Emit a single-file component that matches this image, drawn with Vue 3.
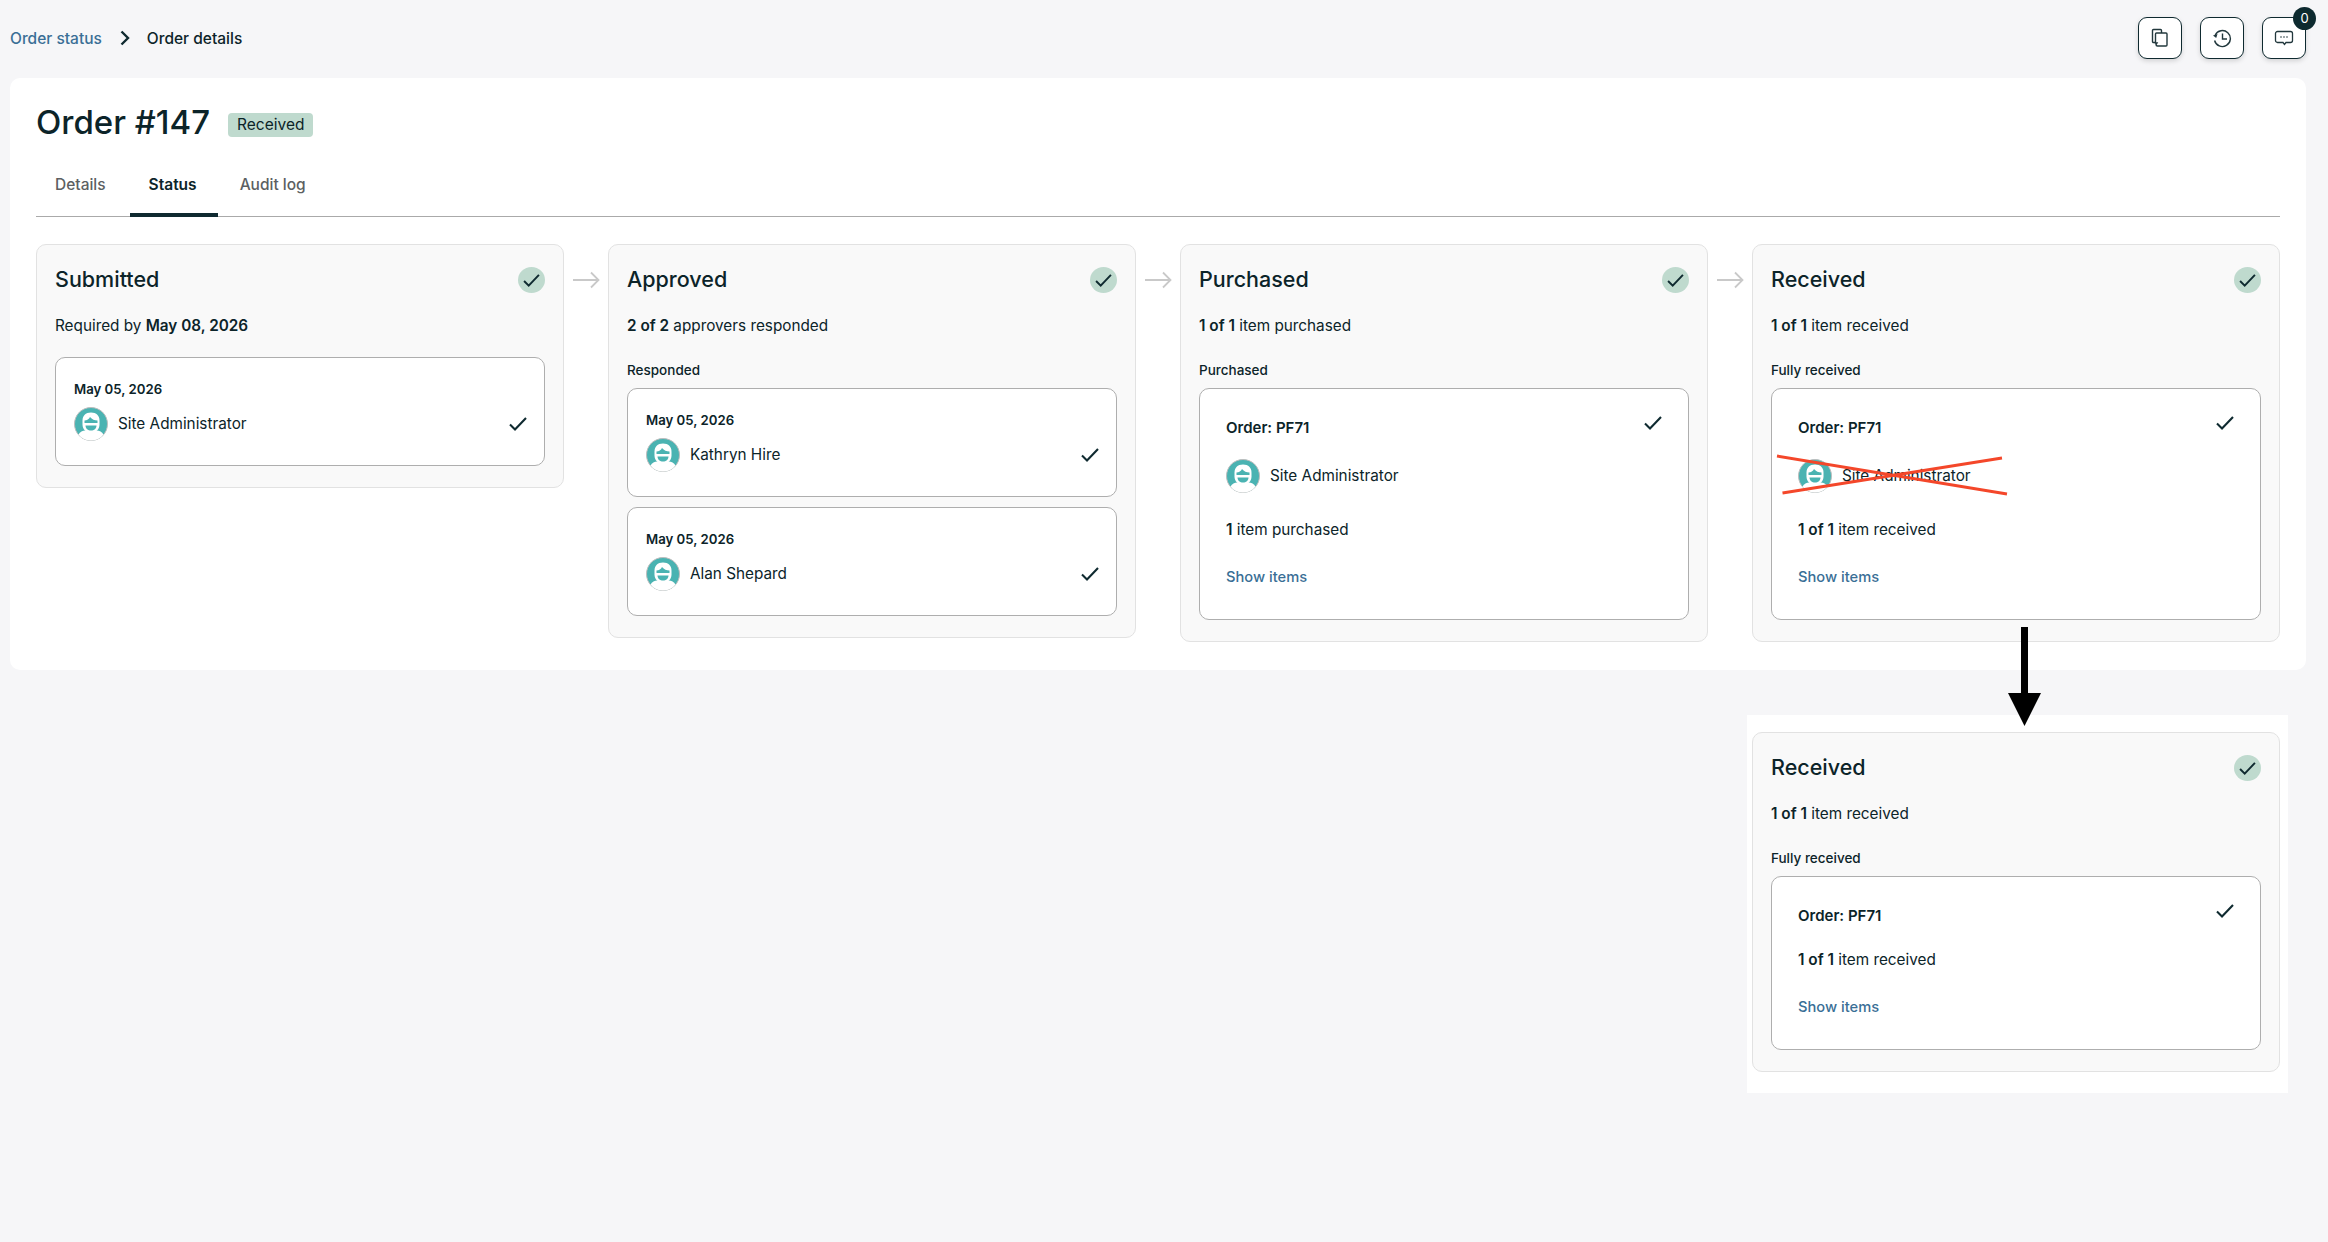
<template>
  <div class="page">
    <svg class="sprites" width="0" height="0" aria-hidden="true">
      <symbol id="avatar" viewBox="0 0 34 34">
        <circle cx="17" cy="17" r="16.500" fill="#4ab3b2" stroke="#bdbdbd" />
        <path d="M4.500 27.500c1.500-2.500 4-4 7-4h11c3 0 5.500 1.500 7 4-3 4-7.500 6-12.500 6s-9.500-2-12.500-6z" fill="#fff" />
        <path d="M17 5.500c5.500 0 8.500 3.500 8.500 8v4c0 5-3.500 8-8.500 8s-8.500-3-8.500-8v-4c0-4.500 3-8 8.500-8z" fill="#fff" />
        <path d="M10.500 13.500c2.500 0 4.500-1.500 5.500-3.500 2 2.500 4.500 3.500 7.500 3.500v2.500h-13z" fill="#4ab3b2" />
        <path d="M11.500 18.500h11c0 3-2.500 5-5.500 5s-5.500-2-5.500-5z" fill="#4ab3b2" />
      </symbol>
      <symbol id="tick" viewBox="0 0 18 14">
        <path d="M1 7.500 6 12.500 17 1" fill="none" stroke="#0f2a30" stroke-width="2.100" />
      </symbol>
    </svg>

    <header class="topbar">
      <nav class="crumbs">
        <a class="crumb-link">Order status</a>
        <svg class="crumb-sep" width="10" height="16" viewBox="0 0 10 16">
          <path d="M1.500 1.500 8 8 1.500 14.500" fill="none" stroke="#0f2a30" stroke-width="2.400" />
        </svg>
        <span class="crumb-current">Order details</span>
      </nav>
      <div class="actions">
        <button class="icon-btn">
          <svg width="20" height="20" viewBox="0 0 20 20" fill="none" stroke="#22383d" stroke-width="1.400">
            <path d="M5.500 14.500H3.500a1 1 0 0 1-1-1V2.500a1 1 0 0 1 1-1h7a1 1 0 0 1 1 1V5" />
            <path d="M6.500 5h9.500a1 1 0 0 1 1 1v11a1 1 0 0 1-1 1H7.500a1.500 1.500 0 0 1-1.500-1.500l1-1.500H5.500V6a1 1 0 0 1 1-1z" />
          </svg>
        </button>
        <button class="icon-btn">
          <svg width="20" height="20" viewBox="0 0 20 20" fill="none" stroke="#22383d" stroke-width="1.400">
            <path d="M3.200 7a8 8 0 1 1-.6 5.500" />
            <path d="M1 7.500 4.200 10 5.500 6z" fill="#22383d" stroke="none" />
            <path d="M10.500 5.500v5.500H15" />
          </svg>
        </button>
        <button class="icon-btn">
          <svg width="20" height="16" viewBox="0 0 20 16" fill="none" stroke="#22383d" stroke-width="1.300">
            <path d="M3.500 1.500h13a2 2 0 0 1 2 2v7a2 2 0 0 1-2 2h-4.500l-1.500 2-1.500-2H3.500a2 2 0 0 1-2-2v-7a2 2 0 0 1 2-2z" />
            <circle cx="7" cy="7" r=".8" fill="#22383d" stroke="none" />
            <circle cx="10" cy="7" r=".8" fill="#22383d" stroke="none" />
            <circle cx="13" cy="7" r=".8" fill="#22383d" stroke="none" />
          </svg>
          <span class="count">0</span>
        </button>
      </div>
    </header>

    <main class="panel">
      <div class="title-row">
        <h1>Order #147</h1>
        <span class="pill">Received</span>
      </div>

      <div class="tabs">
        <span v-for="t in tabs" :key="t" class="tab" :class="{ active: t === 'Status' }">{{ t }}</span>
      </div>

      <section class="steps">
        <template v-for="(step, i) in steps" :key="step.title">
          <div v-if="i > 0" class="arrow">
            <svg width="27" height="18" viewBox="0 0 27 18" fill="none" stroke="#c9c9c9" stroke-width="1.800">
              <path d="M0 9h25M18 1.500 25.500 9 18 16.500" />
            </svg>
          </div>
          <article class="step">
            <div class="step-head">
              <h2>{{ step.title }}</h2>
              <span class="done"><svg width="17" height="13"><use href="#tick" /></svg></span>
            </div>
            <p class="summary"><b v-if="step.lead">{{ step.lead }}</b> {{ step.text }} <b v-if="step.tail">{{ step.tail }}</b></p>
            <div v-if="step.label" class="label">{{ step.label }}</div>

            <div v-for="p in step.people" :key="p" class="box person" :class="{ first: !step.label }">
              <div class="date">May 05, 2026</div>
              <div class="person-row">
                <svg class="avatar" width="34" height="34"><use href="#avatar" /></svg>
                <span class="name">{{ p }}</span>
                <svg class="tick" width="18" height="14"><use href="#tick" /></svg>
              </div>
            </div>

            <div v-if="step.order" class="box order">
              <div class="order-row">
                <span class="order-no">Order: PF71</span>
                <svg class="tick" width="18" height="14"><use href="#tick" /></svg>
              </div>
              <div class="person-row by">
                <svg class="avatar" width="34" height="34"><use href="#avatar" /></svg>
                <span class="name">Site Administrator</span>
              </div>
              <p class="count-line"><b>{{ step.order }}</b> {{ step.orderText }}</p>
              <a class="show">Show items</a>
            </div>
          </article>
        </template>
      </section>
    </main>

    <div class="after">
      <article class="step">
        <div class="step-head">
          <h2>Received</h2>
          <span class="done"><svg width="17" height="13"><use href="#tick" /></svg></span>
        </div>
        <p class="summary"><b>1 of 1</b> item received</p>
        <div class="label">Fully received</div>
        <div class="box order">
          <div class="order-row">
            <span class="order-no">Order: PF71</span>
            <svg class="tick" width="18" height="14"><use href="#tick" /></svg>
          </div>
          <p class="count-line compact"><b>1 of 1</b> item received</p>
          <a class="show">Show items</a>
        </div>
      </article>
    </div>

    <!-- review markup drawn over the screenshot -->
    <svg class="markup" width="2328" height="1242" viewBox="0 0 2328 1242">
      <path d="M1777 456 2007 494M1782.500 493 2002 458" stroke="#f4472a" stroke-width="3" fill="none" />
      <path d="M2024.500 627v68" stroke="#000" stroke-width="7" fill="none" />
      <path d="M2008 693h33l-16.500 33z" fill="#000" />
    </svg>
  </div>
</template>

<script setup>
const tabs = ['Details', 'Status', 'Audit log']

const steps = [
  { title: 'Submitted', text: 'Required by', tail: 'May 08, 2026', people: ['Site Administrator'] },
  {
    title: 'Approved',
    lead: '2 of 2',
    text: 'approvers responded',
    label: 'Responded',
    people: ['Kathryn Hire', 'Alan Shepard'],
  },
  {
    title: 'Purchased',
    lead: '1 of 1',
    text: 'item purchased',
    label: 'Purchased',
    order: '1',
    orderText: 'item purchased',
  },
  {
    title: 'Received',
    lead: '1 of 1',
    text: 'item received',
    label: 'Fully received',
    order: '1 of 1',
    orderText: 'item received',
  },
]
</script>

<style>
html,
body {
  margin: 0;
  background: #f6f6f8;
}
</style>

<style scoped>
.page {
  position: relative;
  width: 2328px;
  min-height: 1242px;
  display: flex;
  flex-direction: column;
  background: #f6f6f8;
  color: #0c2429;
  font-family: Inter, 'Liberation Sans', sans-serif;
  font-size: 15.300px;
  overflow: hidden;
}

.sprites {
  position: absolute;
}

.topbar {
  height: 78px;
  box-sizing: border-box;
  padding: 17px 22px 0 10px;
  display: flex;
  justify-content: space-between;
  align-items: flex-start;
}

.crumbs {
  height: 42px;
  display: flex;
  align-items: center;
  font-size: 15.500px;
  font-weight: 500;
}

.crumb-link {
  color: #3a6f96;
}

.crumb-sep {
  margin: 0 17px 0 18px;
}

.actions {
  display: flex;
  gap: 18px;
}

.icon-btn {
  position: relative;
  width: 44px;
  height: 42px;
  padding: 0;
  display: flex;
  align-items: center;
  justify-content: center;
  background: #fff;
  border: 1.500px solid #0f2a30;
  border-radius: 9px;
  box-shadow: 0 2px 5px rgba(0, 0, 0, 0.15);
}

.count {
  position: absolute;
  top: -11px;
  right: -11px;
  width: 23px;
  height: 23px;
  border-radius: 50%;
  background: #0d2a2f;
  color: #fff;
  font-family: Inter, sans-serif;
  font-size: 13px;
  line-height: 23px;
  text-align: center;
}

.panel {
  margin: 0 22px 0 10px;
  padding: 24px 26px 28px;
  background: #fff;
  border-radius: 10px;
}

.title-row {
  display: flex;
  align-items: center;
  gap: 18px;
}

h1 {
  margin: 0;
  font-size: 33px;
  line-height: 40px;
  font-weight: 500;
}

.pill {
  margin-top: 6px;
  padding: 0 9px;
  height: 24px;
  line-height: 24px;
  font-size: 15.500px;
  background: #bfdace;
  border-radius: 4px;
}

.tabs {
  margin-top: 22px;
  display: flex;
  gap: 3px;
  border-bottom: 1.500px solid #aaa;
}

.tab {
  padding: 10px 21px 17px 19px;
  font-size: 15.500px;
  font-weight: 500;
  line-height: 22px;
  color: #5c5f62;
  border-bottom: 4px solid transparent;
  margin-bottom: -1.500px;
}

.tab.active {
  color: #0c2429;
  font-weight: 600;
  border-bottom-color: #0f2a30;
}

.steps {
  margin-top: 27px;
  display: flex;
  align-items: flex-start;
}

.arrow {
  width: 44px;
  flex: none;
  display: flex;
  justify-content: center;
  padding-top: 27px;
}

.step {
  flex: 1;
  box-sizing: border-box;
  min-width: 0;
  padding: 20px 18px 21px;
  background: #f9f9f9;
  border: 1.500px solid #e2e2e2;
  border-radius: 10px;
}

.step-head {
  display: flex;
  justify-content: space-between;
  align-items: center;
  height: 28px;
}

h2 {
  margin: 0;
  font-size: 21.500px;
  line-height: 28px;
  font-weight: 500;
}

.done {
  width: 27px;
  height: 26px;
  margin-top: 3px;
  border-radius: 50%;
  background: #bfdace;
  display: flex;
  align-items: center;
  justify-content: center;
}

.summary {
  margin: 22px 0 0;
  line-height: 22px;
}

b {
  font-weight: 600;
}

.label {
  margin-top: 23px;
  font-size: 13.500px;
  line-height: 20px;
  font-weight: 500;
}

.box {
  box-sizing: border-box;
  margin-top: 10px;
  background: #fff;
  border: 1.500px solid #aeaeae;
  border-radius: 10px;
}

.label + .box {
  margin-top: 8px;
}

.box.first {
  margin-top: 20px;
}

.person {
  height: 109px;
  padding: 21px 17px 0 18px;
}

.date {
  font-size: 13.200px;
  line-height: 20px;
  font-weight: 600;
}

.person-row {
  margin-top: 8px;
  display: flex;
  align-items: center;
  gap: 10px;
}

.person-row .tick {
  margin-left: auto;
}

.order {
  padding: 27px 26px 30px;
}

.order-row {
  display: flex;
  justify-content: space-between;
  align-items: flex-start;
  height: 24px;
}

.order-no {
  font-weight: 600;
  font-size: 15px;
  line-height: 24px;
}

.by {
  margin-top: 19px;
}

.count-line {
  margin: 25px 0 0;
  line-height: 24px;
}

.count-line.compact {
  margin-top: 20px;
}

.show {
  display: block;
  margin-top: 23px;
  line-height: 24px;
  font-weight: 500;
  font-size: 14.700px;
  color: #3a6f96;
}

.after {
  align-self: flex-end;
  box-sizing: border-box;
  width: 541px;
  height: 378px;
  margin: 45px 40px 0 0;
  padding: 17px 8px 0 5px;
  background: #fff;
}

.after .step {
  height: 340px;
}

.markup {
  position: absolute;
  left: 0;
  top: 0;
  pointer-events: none;
}
</style>
